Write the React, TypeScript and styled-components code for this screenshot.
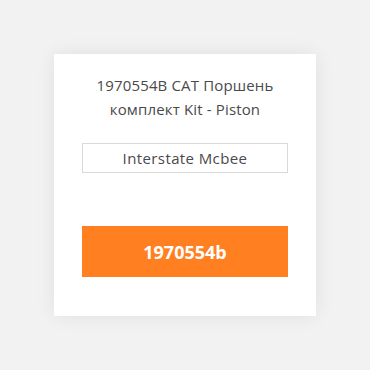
import React from "react";
import styled, { createGlobalStyle } from "styled-components";

const Global = createGlobalStyle`
  html, body { margin: 0; padding: 0; background: #f2f2f2; }
  body { width: 370px; height: 370px; font-family: "Open Sans", "Liberation Sans", sans-serif; }
`;

const Page = styled.div`
  width: 370px;
  height: 370px;
  display: flex;
  align-items: center;
  justify-content: center;
`;

const Card = styled.div`
  width: 262px;
  height: 262px;
  box-sizing: border-box;
  background: #fff;
  box-shadow: 0 0 18px rgba(0, 0, 0, 0.08);
  padding: 19px 28px 0;
  display: flex;
  flex-direction: column;
  align-items: stretch;
`;

const Title = styled.div`
  text-align: center;
  font-size: 15px;
  line-height: 24px;
  color: #4a4a4a;
  letter-spacing: 0.15px;
`;

const Brand = styled.div`
  margin-top: 22px;
  height: 30px;
  box-sizing: border-box;
  border: 1px solid #d9d9d9;
  display: flex;
  align-items: center;
  justify-content: center;
  font-size: 15px;
  letter-spacing: 0.4px;
  color: #4a4a4a;
`;

const Button = styled.div`
  margin-top: 53px;
  height: 51px;
  background: #ff7f21;
  color: #fff;
  display: flex;
  align-items: center;
  justify-content: center;
  font-weight: 700;
  font-size: 18px;
`;

export default function App() {
  return (
    <>
      <Global />
      <Page>
        <Card>
          <Title>
            1970554B CAT Поршень
            <br />
            комплект Kit - Piston
          </Title>
          <Brand>Interstate Mcbee</Brand>
          <Button>1970554b</Button>
        </Card>
      </Page>
    </>
  );
}
